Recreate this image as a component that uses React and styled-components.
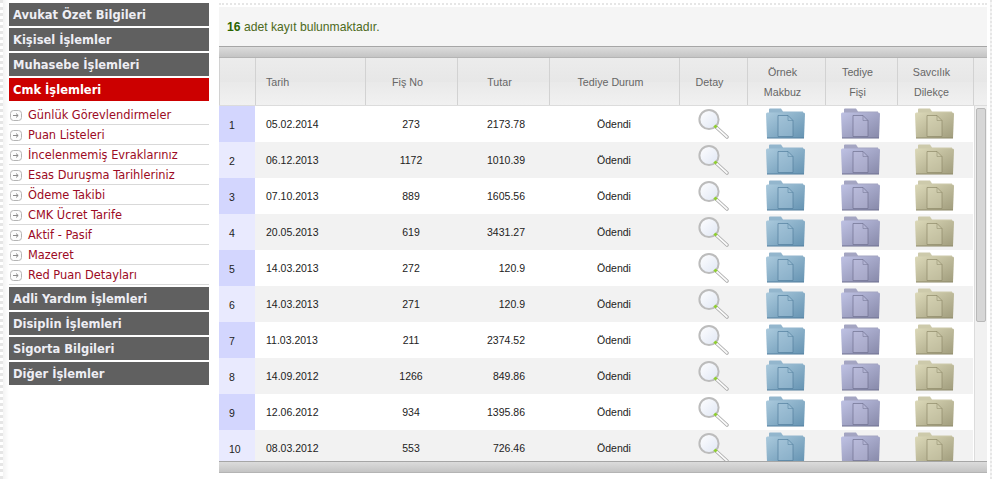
import React from 'react';
import styled, { createGlobalStyle } from 'styled-components';

const COLUMNS = '36px 110px 92px 92px 130px 68px 78px 72px 76px';

const TONES = {
  blue: { tab: '#93b6cd', top: '#abcadd', bottom: '#6593b2', line: '#527f9e', doc: '#adcbde' },
  purple: { tab: '#a4a5c2', top: '#bfc2e4', bottom: '#8789a9', line: '#6f7190', doc: '#c2c4e2' },
  tan: { tab: '#cdcaab', top: '#dcd9b9', bottom: '#a09c7c', line: '#8e8a6a', doc: '#dcd9bb' },
};

const topMenu = ['Avukat Özet Bilgileri', 'Kişisel İşlemler', 'Muhasebe İşlemleri'];
const subMenu = [
  'Günlük Görevlendirmeler',
  'Puan Listeleri',
  'İncelenmemiş Evraklarınız',
  'Esas Duruşma Tarihleriniz',
  'Ödeme Takibi',
  'CMK Ücret Tarife',
  'Aktif - Pasif',
  'Mazeret',
  'Red Puan Detayları',
];
const bottomMenu = ['Adli Yardım İşlemleri', 'Disiplin İşlemleri', 'Sigorta Bilgileri', 'Diğer İşlemler'];

const records = [
  ['05.02.2014', '273', '2173.78'],
  ['06.12.2013', '1172', '1010.39'],
  ['07.10.2013', '889', '1605.56'],
  ['20.05.2013', '619', '3431.27'],
  ['14.03.2013', '272', '120.9'],
  ['14.03.2013', '271', '120.9'],
  ['11.03.2013', '211', '2374.52'],
  ['14.09.2012', '1266', '849.86'],
  ['12.06.2012', '934', '1395.86'],
  ['08.03.2012', '553', '726.46'],
];

export default function App() {
  return (
    <>
      <GlobalStyle />
      <Page>
        <SideBar>
          {topMenu.map((label) => (
            <MenuHeader key={label}>{label}</MenuHeader>
          ))}
          <MenuHeader $active>Cmk İşlemleri</MenuHeader>
          <SubList>
            {subMenu.map((label) => (
              <SubItem key={label}>
                <ArrowIcon />
                <span>{label}</span>
              </SubItem>
            ))}
          </SubList>
          {bottomMenu.map((label) => (
            <MenuHeader key={label}>{label}</MenuHeader>
          ))}
        </SideBar>
        <Main>
          <Info>
            <strong>16</strong> adet kayıt bulunmaktadır.
          </Info>
          <GridBar />
          <HeaderRow>
            <HeadCell />
            <HeadCell $left><span>Tarih</span></HeadCell>
            <HeadCell><span>Fiş No</span></HeadCell>
            <HeadCell><span>Tutar</span></HeadCell>
            <HeadCell><span>Tediye Durum</span></HeadCell>
            <HeadCell><span>Detay</span></HeadCell>
            <HeadCell><span>Örnek<br />Makbuz</span></HeadCell>
            <HeadCell><span>Tediye<br />Fişi</span></HeadCell>
            <HeadCell><span>Savcılık<br />Dilekçe</span></HeadCell>
            <HeadCell />
          </HeaderRow>
          <BodyArea>
            <Rows>
              {records.map(([date, no, amount], i) => (
                <Row key={no} $even={i % 2 === 1}>
                  <IndexCell $even={i % 2 === 1}>{i + 1}</IndexCell>
                  <Cell $align='flex-start' $pad='0 0 0 11px'>{date}</Cell>
                  <Cell>{no}</Cell>
                  <Cell $align='flex-end' $pad='0 24px 0 0'>{amount}</Cell>
                  <Cell>Ödendi</Cell>
                  <Cell $pad='0 0 2px 0'><Magnifier /></Cell>
                  <Cell $pad='0 1px 2px 0'><Folder tone='blue' /></Cell>
                  <Cell $pad='0 1px 2px 0'><Folder tone='purple' /></Cell>
                  <Cell $pad='0 1px 2px 0'><Folder tone='tan' /></Cell>
                </Row>
              ))}
            </Rows>
            <ScrollTrack>
              <ScrollThumb />
            </ScrollTrack>
          </BodyArea>
          <GridBar />
        </Main>
      </Page>
    </>
  );
}

const ArrowIcon = () => (
  <ArrowSvg viewBox='0 0 12 11'>
    <rect x='0.5' y='0.5' width='11' height='10' rx='3' fill='#fbfbfb' stroke='#b4b4b4' />
    <path d='M3 5.5H8M6 3.5L8.2 5.5L6 7.5' fill='none' stroke='#8a8a8a' />
  </ArrowSvg>
);

const Magnifier = () => (
  <IconSvg width='31' height='31' viewBox='0 0 31 31'>
    <defs>
      <linearGradient id='lens' x1='0' y1='0' x2='1' y2='1'>
        <stop offset='0' stopColor='#ffffff' />
        <stop offset='1' stopColor='#dfe6f4' />
      </linearGradient>
    </defs>
    <path d='M17.5 18.5L29 29' stroke='#a8a8a8' strokeWidth='3.4' strokeLinecap='round' />
    <path d='M17.5 18.5L29 29' stroke='#fafafa' strokeWidth='1.7' strokeLinecap='round' />
    <circle cx='11' cy='11.5' r='9.6' fill='url(#lens)' stroke='#bcbcbc' strokeWidth='2' />
    <rect x='16' y='17' width='3' height='3' fill='#8fcf2f' transform='rotate(45 17.5 18.5)' />
  </IconSvg>
);

const Folder = ({ tone }) => {
  const c = TONES[tone];
  return (
    <IconSvg width='39' height='31' viewBox='0 0 39 31'>
      <defs>
        <linearGradient id={`folder-${tone}`} x1='0' y1='0' x2='1' y2='1'>
          <stop offset='0' stopColor={c.top} />
          <stop offset='1' stopColor={c.bottom} />
        </linearGradient>
      </defs>
      <path d='M3 1.5Q3 0.5 4 0.5H15L17 3.5H37V6H3Z' fill={c.tab} />
      <path d='M0 6Q0 4.5 1.5 4.5H37.5Q39 4.5 39 6L38 30H1Z' fill={`url(#folder-${tone})`} />
      <path d='M1 29.5H38V30.5H1Z' fill={c.line} />
      <path d='M12 7.5H22L27 12.5V28.5H12Z' fill={c.doc} fillOpacity='0.4' stroke={c.line} strokeOpacity='0.7' />
      <path d='M22 7.5V12.5H27' fill='none' stroke={c.line} strokeOpacity='0.5' />
    </IconSvg>
  );
};

const GlobalStyle = createGlobalStyle`
  html, body {
    margin: 0;
    padding: 0;
    background: #fff;
  }
`;

const Page = styled.div`
  box-sizing: border-box;
  width: 992px;
  height: 479px;
  overflow: hidden;
  display: flex;
  gap: 10px;
  padding: 3px 3px 0 6px;
  border-left: 3px dotted #e6e6e6;
  border-right: 2px dotted #e6e6e6;
  background: linear-gradient(90deg, #f3f3f3 0, #fff 6px);
`;

const SideBar = styled.aside`
  width: 200px;
  flex-shrink: 0;
  display: flex;
  flex-direction: column;
  gap: 2px;
`;

const MenuHeader = styled.div`
  height: 23px;
  padding-left: 4px;
  display: flex;
  align-items: center;
  background: ${(p) => (p.$active ? '#cc0000' : '#606060')};
  color: ${(p) => (p.$active ? '#fff' : '#eeeef4')};
  font: bold 11.5px 'DejaVu Sans', Verdana, sans-serif;
`;

const SubList = styled.ul`
  list-style: none;
  margin: 2px 0 0;
  padding: 0;
`;

const SubItem = styled.li`
  box-sizing: border-box;
  height: 20px;
  padding: 1px 0 0 1px;
  display: flex;
  align-items: center;
  gap: 6px;
  border-bottom: 1px solid #d9d9d9;
  color: #9c0a24;
  font: 11.4px 'DejaVu Sans', Verdana, sans-serif;
`;

const ArrowSvg = styled.svg`
  width: 12px;
  height: 11px;
  flex-shrink: 0;
`;

const IconSvg = styled.svg`
  display: block;
  flex-shrink: 0;
`;

const Main = styled.main`
  flex: 1;
  box-sizing: border-box;
  height: 470px;
  display: flex;
  flex-direction: column;
  border-top: 2px dotted #e6e6e6;
  font: 10.5px 'Liberation Sans', Arial, sans-serif;
  color: #222;
`;

const Info = styled.div`
  height: 39px;
  margin-top: 2px;
  flex-shrink: 0;
  box-sizing: border-box;
  padding-left: 8px;
  display: flex;
  align-items: center;
  white-space: pre;
  background: #f5f5f5;
  color: #4d6a1c;
  font-size: 12.15px;

  strong {
    color: #2a6400;
  }
`;

const GridBar = styled.div`
  height: 12px;
  flex-shrink: 0;
  box-sizing: border-box;
  border-top: 1px solid #a6a6a6;
  border-bottom: 1px solid #b4b4b4;
  background: linear-gradient(#dcdcdc, #c4c4c4);
`;

const HeaderRow = styled.div`
  height: 48px;
  flex-shrink: 0;
  box-sizing: border-box;
  display: grid;
  grid-template-columns: ${COLUMNS} 1fr;
  border-bottom: 1px solid #dcdcdc;
  background: linear-gradient(#ececec 0, #e7e7e7 50%, #e9e9e9 50%, #f1f1f1 100%);
`;

const HeadCell = styled.div`
  box-sizing: border-box;
  display: flex;
  align-items: center;
  justify-content: ${(p) => (p.$left ? 'flex-start' : 'center')};
  padding: ${(p) => (p.$left ? '0 0 0 10px' : '0 8px 0 0')};
  border-left: 1px solid #d2d2d2;
  text-align: center;
  font-size: 10.7px;
  line-height: 20px;
  color: #666;
`;

const BodyArea = styled.div`
  flex: 1;
  min-height: 0;
  display: flex;
  overflow: hidden;
`;

const Rows = styled.div`
  width: 754px;
  flex-shrink: 0;
`;

const Row = styled.div`
  height: 36px;
  display: grid;
  grid-template-columns: ${COLUMNS};
  background: ${(p) => (p.$even ? '#f2f2f2' : '#fff')};
`;

const Cell = styled.div`
  box-sizing: border-box;
  display: flex;
  align-items: center;
  justify-content: ${(p) => p.$align || 'center'};
  padding: ${(p) => p.$pad || '0'};
`;

const IndexCell = styled(Cell)`
  justify-content: flex-start;
  padding: 1px 0 0 10px;
  background: ${(p) => (p.$even ? '#e9eafe' : '#d3d6fe')};
`;

const ScrollTrack = styled.div`
  flex: 1;
  box-sizing: border-box;
  margin-left: 1px;
  padding: 2px 1px 0 1px;
  background: #f1f1f1;
  border-left: 1px solid #dcdcdc;
`;

const ScrollThumb = styled.div`
  height: 214px;
  box-sizing: border-box;
  border: 1px solid #b8b8b8;
  border-radius: 2px;
  background: #d6d6d6;
`;
